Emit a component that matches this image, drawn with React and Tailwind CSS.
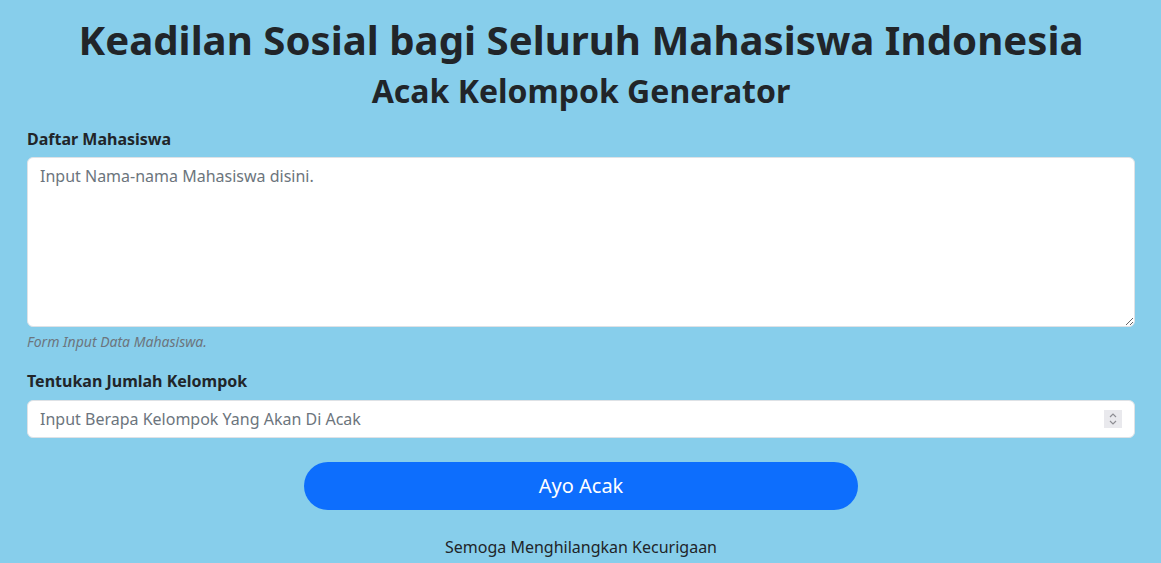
export default function App() {
  return (
    <div className="min-h-[563px] bg-[#87ceeb] pl-[27px] pr-[26px] text-[#212529]" style={{ fontFamily: '"Noto Sans", sans-serif' }}>
      <h1 className="pt-[16px] text-center text-[40.2px] font-bold leading-[1.2] mb-2">
        Keadilan Sosial bagi Seluruh Mahasiswa Indonesia
      </h1>
      <h2 className="text-center text-[32px] font-bold leading-[1.2] mb-2">
        Acak Kelompok Generator
      </h2>
      <div className="pt-[8px]">
        <label className="block text-base font-bold leading-6 mb-[6px]">Daftar Mahasiswa</label>
        <textarea
          className="block w-full h-[170px] rounded-[6px] border border-[#dee2e6] bg-white px-3 py-[6px] text-base leading-6 outline-none placeholder:text-[#6c757d]"
          placeholder="Input Nama-nama Mahasiswa disini."
        />
        <div className="mt-1 text-[14px] leading-[21px] italic text-[#6c757d]">Form Input Data Mahasiswa.</div>
      </div>
      <div className="mt-[17px]">
        <label className="block text-base font-bold leading-6 mb-[7px]">Tentukan Jumlah Kelompok</label>
        <div className="relative">
          <input
            type="text"
            className="block w-full h-[38px] rounded-[6px] border border-[#dee2e6] bg-white px-3 text-base leading-6 outline-none placeholder:text-[#6c757d]"
            placeholder="Input Berapa Kelompok Yang Akan Di Acak"
          />
          <div className="absolute right-[13px] top-[10px] flex h-[18px] w-[18px] items-center justify-center bg-[#e9e9ed]">
            <svg width="10" height="14" viewBox="0 0 10 14" fill="none" stroke="#8e8e94" strokeWidth="1.2">
              <path d="M2 5 L5 2 L8 5" />
              <path d="M2 9 L5 12 L8 9" />
            </svg>
          </div>
        </div>
      </div>
      <div className="mt-6 flex justify-center">
        <button className="w-1/2 h-[48px] rounded-full bg-[#0d6efd] text-[20px] text-white">Ayo Acak</button>
      </div>
      <p className="mt-[25px] text-center text-base leading-6">Semoga Menghilangkan Kecurigaan</p>
    </div>
  );
}
